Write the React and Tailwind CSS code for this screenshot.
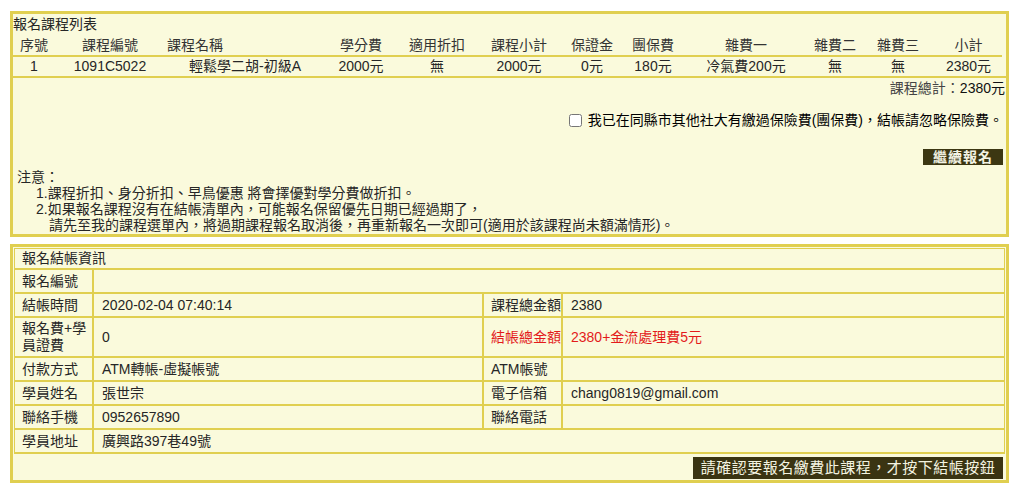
import { useState } from "react";

const FONT = { fontFamily: '"Liberation Sans", "Noto Sans CJK TC", sans-serif' };

const COLS = [
  { head: "序號", val: "1" },
  { head: "課程編號", val: "1091C5022" },
  { head: "課程名稱", val: "輕鬆學二胡-初級A", headLeft: true },
  { head: "學分費", val: "2000元" },
  { head: "適用折扣", val: "無" },
  { head: "課程小計", val: "2000元" },
  { head: "保證金", val: "0元" },
  { head: "團保費", val: "180元" },
  { head: "雜費一", val: "冷氣費200元" },
  { head: "雜費二", val: "無" },
  { head: "雜費三", val: "無" },
  { head: "小計", val: "2380元" }
];

const GRID = "grid grid-cols-[42px_110px_160px_72px_80px_84px_62px_60px_126px_52px_74px_67px]";

function Label({ children, red }) {
  return (
    <div className={`flex min-h-[22px] items-center whitespace-nowrap bg-[#fafadc] pl-[7px] ${red ? "text-[#e31b1b]" : ""}`}>
      {children}
    </div>
  );
}

function Value({ children, red, span }) {
  return (
    <div className={`flex min-h-[22px] items-center bg-[#fafadc] pl-[8px] ${red ? "text-[#e31b1b]" : ""} ${span ? "col-span-3" : ""}`}>
      {children}
    </div>
  );
}

export default function App() {
  const [skipInsurance, setSkipInsurance] = useState(false);

  return (
    <div style={FONT} className="min-h-[489px] bg-white pl-[10px] pt-[11px] text-[14px] text-[#262626]">
      <section className="w-[999px] border-[3px] border-[#e0cf50] bg-[#fafadc]">
        <div className="h-[21px] leading-[21px]">報名課程列表</div>
        <div className={`${GRID} h-[22px] w-[989px] border-b-2 border-[#e0cf50] leading-[20px] text-[#333]`}>
          {COLS.map((c) => (
            <div key={c.head} className={c.headLeft ? "pl-[2px] text-left" : "text-center"}>
              {c.head}
            </div>
          ))}
        </div>
        <div className="h-[21px] border-b-2 border-[#e0cf50] leading-[19px]">
          <div className={`${GRID} w-[989px]`}>
            {COLS.map((c) => (
              <div key={c.head} className="text-center">
                {c.val}
              </div>
            ))}
          </div>
        </div>
        <div className="h-[20px] pr-px text-right leading-[20px] text-[#444]">
          課程總計：<span className="text-[#111]">2380元</span>
        </div>
        <label className="mt-[13px] flex h-[18px] items-center justify-end gap-[6px] pr-[3px] leading-[18px] text-black">
          <input
            type="checkbox"
            checked={skipInsurance}
            onChange={(e) => setSkipInsurance(e.target.checked)}
            className="m-0 h-[13px] w-[13px]"
          />
          <span>我已在同縣市其他社大有繳過保險費(團保費)，結帳請忽略保險費。</span>
        </label>
        <div className="mt-[20px] flex justify-end pr-[3px]">
          <button className="h-[16px] w-[80px] bg-[#3c3712] text-center font-bold leading-[16px] tracking-[1px] text-[#f3f3e4]">
            繼續報名
          </button>
        </div>
        <div className="mt-[4px] pb-px leading-[16px]">
          <div className="pl-[4px]">注意：</div>
          <div className="pl-[23px]">1.課程折扣、身分折扣、早鳥優惠 將會擇優對學分費做折扣。</div>
          <div className="pl-[23px]">2.如果報名課程沒有在結帳清單內，可能報名保留優先日期已經過期了，</div>
          <div className="pl-[36px]">請先至我的課程選單內，將過期課程報名取消後，再重新報名一次即可(適用於該課程尚未額滿情形)。</div>
        </div>
      </section>

      <section className="mt-[7px] w-[999px] border-[3px] border-[#e0cf50] bg-[#fafadc] p-px">
        <div className="grid grid-cols-[77px_388px_77px_1fr] gap-[2px] bg-[#e0cf50] px-px pb-[2px] pt-px leading-[17px]">
          <div className="col-span-4 flex h-[19px] items-center bg-[#fafadc] pl-[7px]">報名結帳資訊</div>
          <Label>報名編號</Label>
          <Value span> </Value>
          <Label>結帳時間</Label>
          <Value>2020-02-04 07:40:14</Value>
          <Label>課程總金額</Label>
          <Value>2380</Value>
          <div className="flex min-h-[38px] items-center bg-[#fafadc] py-[2px] pl-[7px]">報名費+學員證費</div>
          <Value>0</Value>
          <Label red>結帳總金額</Label>
          <Value red>2380+金流處理費5元</Value>
          <Label>付款方式</Label>
          <Value>ATM轉帳-虛擬帳號</Value>
          <Label>ATM帳號</Label>
          <Value> </Value>
          <Label>學員姓名</Label>
          <Value>張世宗</Value>
          <Label>電子信箱</Label>
          <Value>chang0819@gmail.com</Value>
          <Label>聯絡手機</Label>
          <Value>0952657890</Value>
          <Label>聯絡電話</Label>
          <Value> </Value>
          <Label>學員地址</Label>
          <Value span>廣興路397巷49號</Value>
        </div>
        <div className="flex h-[25px] items-end justify-end pr-[2px]">
          <button className="h-[22px] w-[310px] bg-[#3a3412] text-center text-[15px] leading-[22px] tracking-[0.5px] text-[#f3f3e0]">
            請確認要報名繳費此課程，才按下結帳按鈕
          </button>
        </div>
      </section>
    </div>
  );
}
